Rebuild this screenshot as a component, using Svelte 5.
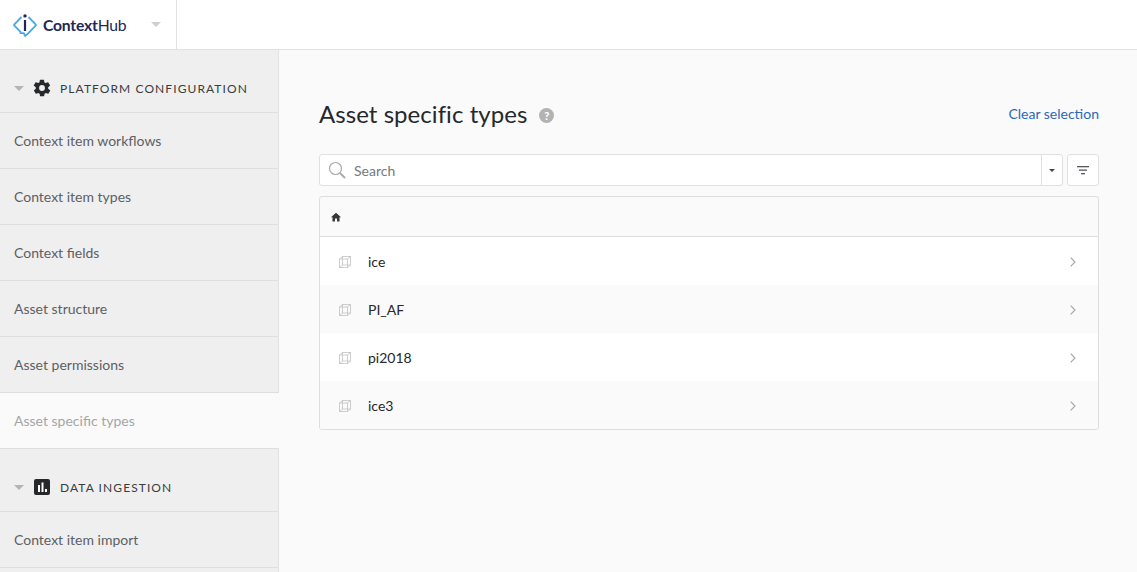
<script>
  const platformItems = [
    'Context item workflows',
    'Context item types',
    'Context fields',
    'Asset structure',
    'Asset permissions',
    'Asset specific types'
  ];
  const rows = ['ice', 'PI_AF', 'pi2018', 'ice3'];
</script>

<div class="app">
  <header class="topbar">
    <div class="brand">
      <svg class="logo" width="24" height="24" viewBox="0 0 24 24" fill="none">
        <path d="M8.500 4 1.400 11.300a1 1 0 0 0 0 1.400L8 19.400" stroke="#4aa8e0" stroke-width="1.800" stroke-linejoin="round" />
        <path d="M15.500 4l7.100 7.300a1 1 0 0 1 0 1.400l-8.400 8.600-2.200 1.700-1.200-2.900H6.600" stroke="#4aa8e0" stroke-width="1.800" stroke-linejoin="round" />
        <circle cx="12" cy="2.900" r="1.700" fill="#1d2759" />
        <rect x="10.900" y="7" width="2.200" height="11" fill="#1d2759" />
      </svg>
      <span class="wordmark"><b>Context</b>Hub</span>
      <span class="caret brand-caret"></span>
    </div>
  </header>

  <div class="body">
    <aside class="sidebar">
      <div class="section">
        <span class="caret"></span>
        <svg class="section-icon" width="20" height="20" viewBox="0 0 24 24" fill="#26282b">
          <path d="M19.400 13c.1-.3.1-.7.1-1s0-.7-.1-1l2.100-1.600c.2-.2.2-.4.1-.6l-2-3.500c-.1-.2-.4-.3-.6-.2l-2.500 1c-.5-.4-1.100-.7-1.700-1l-.4-2.600c0-.3-.2-.4-.5-.4h-4c-.3 0-.5.100-.5.400l-.4 2.600c-.6.300-1.200.6-1.700 1l-2.500-1c-.2-.1-.5 0-.6.2l-2 3.500c-.1.200-.1.400.1.600L4.600 11c-.1.300-.1.700-.1 1s0 .7.100 1l-2.100 1.600c-.2.200-.2.400-.1.600l2 3.500c.1.200.4.300.6.200l2.500-1c.5.400 1.100.7 1.700 1l.4 2.600c0 .3.200.4.500.4h4c.3 0 .5-.1.500-.4l.4-2.600c.6-.3 1.200-.6 1.700-1l2.500 1c.2.100.5 0 .6-.2l2-3.500c.1-.2.100-.4-.1-.6L19.400 13zM12 15.500a3.500 3.500 0 1 1 0-7 3.500 3.500 0 0 1 0 7z" />
        </svg>
        <span class="section-label">PLATFORM CONFIGURATION</span>
      </div>
      {#each platformItems as item, i}
        <div class="nav-item" class:active={i === 5}>{item}</div>
      {/each}
      <div class="section">
        <span class="caret"></span>
        <svg class="section-icon data" width="16" height="16" viewBox="0 0 16 16">
          <rect width="16" height="16" rx="2" fill="#26282b" />
          <rect x="4" y="6" width="2" height="7" fill="#fff" />
          <rect x="7.500" y="3.500" width="2" height="9.500" fill="#fff" />
          <rect x="11" y="10" width="2" height="3" fill="#fff" />
        </svg>
        <span class="section-label">DATA INGESTION</span>
      </div>
      <div class="nav-item">Context item import</div>
    </aside>

    <main class="content">
      <div class="title-row">
        <h1>Asset specific types</h1>
        <span class="help">?</span>
        <a class="clear" href="#top">Clear selection</a>
      </div>

      <div class="search-row">
        <div class="search">
          <svg class="search-icon" width="18" height="18" viewBox="0 0 18 18" fill="none" stroke="#aaaaaa">
            <circle cx="7.500" cy="7.500" r="6" stroke-width="1.200" />
            <path d="M12 12l5 5" stroke-width="2" />
          </svg>
          <span class="placeholder">Search</span>
          <span class="search-drop"><span class="mini-caret"></span></span>
        </div>
        <button class="filter" aria-label="Filter">
          <svg width="12" height="9" viewBox="0 0 12 9" fill="#55585c">
            <rect width="12" height="1.300" />
            <rect x="2" y="3.500" width="8" height="1.300" />
            <rect x="4" y="7" width="4" height="1.300" />
          </svg>
        </button>
      </div>

      <div class="table">
        <div class="crumbs">
          <svg width="10" height="10" viewBox="0 0 10 10" fill="#33363a">
            <path d="M5 .8 0 5.300h1.500V9.400h2.500V6.400h2V9.400h2.500V5.300H10z" />
          </svg>
        </div>
        {#each rows as row}
          <div class="row">
            <svg class="cube" width="12" height="12" viewBox="0 0 12 12" fill="none" stroke="#c2c2c2" stroke-width="0.800">
              <rect x="0.500" y="3" width="8" height="8.500" />
              <rect x="3.500" y="0.500" width="8" height="8.500" />
              <path d="M.5 3l3-2.500M8.500 3l3-2.500M.5 11.500l3-2.500M8.500 11.500l3-2.500" />
            </svg>
            <span class="row-name">{row}</span>
            <svg class="chevron" width="6" height="10" viewBox="0 0 6 10" fill="none" stroke="#a8a8a8" stroke-width="1.200">
              <path d="M.7.7 5 5 .7 9.300" />
            </svg>
          </div>
        {/each}
      </div>
    </main>
  </div>
</div>

<style>
  :global(body) {
    margin: 0;
    overflow: hidden;
  }

  .app {
    height: 572px;
    display: flex;
    flex-direction: column;
    font-family: Lato, "Open Sans", sans-serif;
    color: #26282b;
    overflow: hidden;
  }

  .topbar {
    height: 49px;
    flex: none;
    background: #fff;
    border-bottom: 1px solid #e2e2e2;
    display: flex;
  }

  .brand {
    width: 177px;
    border-right: 1px solid #e2e2e2;
    display: flex;
    align-items: center;
    padding-left: 13px;
    box-sizing: border-box;
  }

  .logo {
    flex: none;
  }

  .wordmark {
    margin-left: 6px;
    font-size: 15.7px;
    letter-spacing: -0.2px;
    color: #1d2759;
    font-weight: 400;
  }

  .wordmark b {
    font-weight: 700;
  }

  .caret {
    width: 0;
    height: 0;
    border-left: 5px solid transparent;
    border-right: 5px solid transparent;
    border-top: 5px solid #b4b4b4;
    flex: none;
  }

  .brand-caret {
    margin-left: 25px;
    border-top-color: #cfcfcf;
  }

  .body {
    flex: 1;
    display: flex;
    min-height: 0;
  }

  .sidebar {
    width: 279px;
    flex: none;
    box-sizing: border-box;
    background: #efefef;
    border-right: 1px solid #e2e2e2;
  }

  .section {
    box-sizing: border-box;
    border-bottom: 1px solid #dedede;
    display: flex;
    align-items: center;
    padding: 14px 14px 0;
    height: 63px;
  }

  .section-icon {
    margin-left: 8px;
    flex: none;
  }

  .section-icon.data {
    margin-left: 10px;
    margin-right: 2px;
  }

  .section-label {
    margin-left: 8px;
    font-size: 12px;
    letter-spacing: 1.08px;
    color: #3a3d40;
  }

  .nav-item {
    height: 55px;
    border-bottom: 1px solid #dedede;
    display: flex;
    align-items: center;
    padding: 0 14px;
    font-size: 14px;
    color: #5d6064;
  }

  .nav-item.active {
    background: #fafafa;
    color: #a4a6a8;
    margin-right: -1px;
    position: relative;
  }

  .content {
    flex: 1;
    min-width: 0;
    background: #fafafa;
    padding: 0 38px 0 40px;
  }

  .title-row {
    height: 104px;
    display: flex;
    align-items: center;
    padding-top: 23px;
    box-sizing: border-box;
  }

  h1 {
    margin: 0;
    font-size: 24px;
    letter-spacing: 0.05px;
    font-weight: 400;
    color: #26282b;
  }

  .help {
    width: 15px;
    height: 15px;
    margin-left: 12px;
    margin-top: 3px;
    border-radius: 50%;
    background: #b3b3b3;
    color: #fff;
    font-size: 11px;
    font-weight: 900;
    display: flex;
    align-items: center;
    justify-content: center;
  }

  .clear {
    margin-left: auto;
    font-size: 14px;
    color: #2a68bb;
    text-decoration: none;
  }

  .search-row {
    display: flex;
    gap: 4px;
    height: 32px;
  }

  .search {
    flex: 1;
    box-sizing: border-box;
    background: #fff;
    border: 1px solid #e0e0e0;
    border-radius: 3px;
    display: flex;
    align-items: center;
    padding-left: 9px;
  }

  .search-icon {
    margin-left: -1px;
  }

  .placeholder {
    margin-left: 8px;
    font-size: 14px;
    color: #76797c;
  }

  .search-drop {
    margin-left: auto;
    width: 20px;
    height: 100%;
    border-left: 1px solid #e0e0e0;
    display: flex;
    align-items: center;
    justify-content: center;
  }

  .mini-caret {
    width: 0;
    height: 0;
    border-left: 3px solid transparent;
    border-right: 3px solid transparent;
    border-top: 3px solid #44474a;
  }

  .filter {
    width: 32px;
    padding: 0;
    background: #fff;
    border: 1px solid #e0e0e0;
    border-radius: 3px;
    display: flex;
    align-items: center;
    justify-content: center;
  }

  .table {
    margin-top: 10px;
    border: 1px solid #dedede;
    border-radius: 3px;
    overflow: hidden;
  }

  .crumbs {
    height: 39px;
    border-bottom: 1px solid #dedede;
    display: flex;
    align-items: center;
    padding-left: 11px;
  }

  .row {
    height: 48px;
    display: flex;
    align-items: center;
    padding-left: 19px;
    padding-right: 22px;
    background: #fff;
    font-size: 14px;
    color: #26282b;
  }

  .row:nth-child(odd) {
    background: #fafafa;
  }

  .row-name {
    margin-left: 17px;
  }

  .cube {
    margin-top: 1px;
  }

  .chevron {
    margin-left: auto;
    margin-top: 1px;
  }
</style>
